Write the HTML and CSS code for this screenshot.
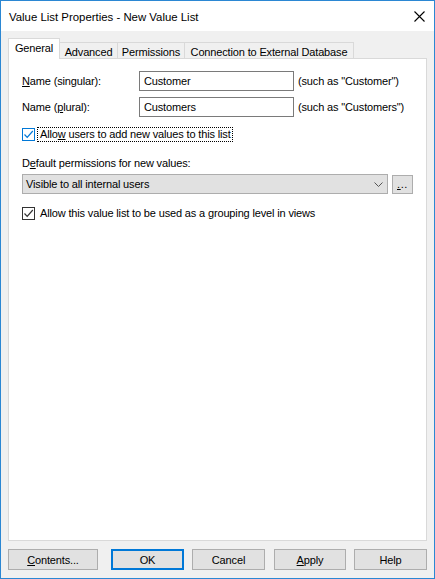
FILE: index.html
```html
<!DOCTYPE html>
<html>
<head>
<meta charset="utf-8">
<link rel="stylesheet" href="styles.css">
</head>
<body>
<div class="window">
  <div class="titlebar">
    <span class="title">Value List Properties - New Value List</span>
    <svg class="close" width="11" height="11" viewBox="0 0 11 11"><path d="M0.5 0.5 L10.5 10.5 M10.5 0.5 L0.5 10.5" stroke="#000" stroke-width="1.1" fill="none"/></svg>
  </div>
  <div class="client">
    <div class="tabs">
      <div class="tab active t-general">General</div>
      <div class="tab t-adv">Advanced</div>
      <div class="tab t-perm">Permissions</div>
      <div class="tab t-conn">Connection to External Database</div>
    </div>
    <div class="panel">
      <div class="row r1">
        <span class="label"><u>N</u>ame (singular):</span>
        <span class="input">Customer</span>
        <span class="hint">(such as "Customer")</span>
      </div>
      <div class="row r2">
        <span class="label">Name (<u>p</u>lural):</span>
        <span class="input">Customers</span>
        <span class="hint">(such as "Customers")</span>
      </div>
      <div class="check-row c1">
        <span class="box box-focus">
          <svg width="11" height="11" viewBox="0 0 11 11"><path d="M1.5 5.5 L4.2 8.3 L9.8 2" stroke="#0078d7" stroke-width="1.2" fill="none"/></svg>
        </span>
        <span class="check-label focus">Allo<u>w</u> users to add new values to this list</span>
      </div>
      <div class="section-label">D<u>e</u>fault permissions for new values:</div>
      <div class="combo-row">
        <div class="combo">
          <span>Visible to all internal users</span>
          <svg class="chev" width="9" height="5" viewBox="0 0 9 5"><path d="M0.5 0.5 L4.5 4.5 L8.5 0.5" stroke="#555" stroke-width="1" fill="none"/></svg>
        </div>
        <div class="dots"><u>.</u>..</div>
      </div>
      <div class="check-row c2">
        <span class="box">
          <svg width="11" height="11" viewBox="0 0 11 11"><path d="M1.5 5.5 L4.2 8.3 L9.8 2" stroke="#333" stroke-width="1.2" fill="none"/></svg>
        </span>
        <span class="check-label">Allow this value list to be used as a <u>g</u>rouping level in views</span>
      </div>
    </div>
    <div class="buttons">
      <div class="btn b-contents"><u>C</u>ontents...</div>
      <div class="btn b-ok default">OK</div>
      <div class="btn b-cancel">Cancel</div>
      <div class="btn b-apply"><u>A</u>pply</div>
      <div class="btn b-help">Help</div>
    </div>
  </div>
</div>
</body>
</html>
```
FILE: styles.css
```css
* { box-sizing: border-box; }
html, body { margin: 0; padding: 0; }
body {
  width: 435px;
  height: 579px;
  font-family: "Liberation Sans", Arial, sans-serif;
  font-size: 11px;
  letter-spacing: -0.15px;
  color: #000;
  background: #fff;
}
u { text-decoration: underline; text-underline-offset: 1px; }
.window {
  width: 435px;
  height: 579px;
  border: 1px solid #2b87d3;
  display: flex;
  flex-direction: column;
  background: #f0f0f0;
}
.titlebar {
  height: 30px;
  background: #fff;
  display: flex;
  align-items: center;
  justify-content: space-between;
  padding-left: 8px;
  padding-right: 9px;
  flex: none;
}
.title { font-size: 11.4px; letter-spacing: 0; padding-top: 1px; }
.close { display: block; }
.client {
  flex: 1;
  display: flex;
  flex-direction: column;
  padding: 7px 7px 8px 7px;
}
.tabs {
  height: 21px;
  display: flex;
  align-items: flex-end;
  flex: none;
}
.tab {
  height: 17px;
  border: 1px solid #d9d9d9;
  border-bottom: none;
  border-left: none;
  background: #f0f0f0;
  display: flex;
  align-items: center;
  justify-content: center;
  padding-top: 1px;
  white-space: nowrap;
}
.tab.active {
  height: 21px;
  background: #fff;
  border-left: 1px solid #d9d9d9;
  position: relative;
  z-index: 1;
  padding-top: 0;
  padding-bottom: 2px;
}
.t-general { width: 52px; }
.t-adv { width: 58px; }
.t-perm { width: 67px; }
.t-conn { width: 169px; }
.panel {
  margin-top: -1px;
  height: 483px;
  background: #fff;
  border: 1px solid #d9d9d9;
  padding: 12px 13px 0 13px;
  flex: none;
}
.row {
  display: flex;
  align-items: center;
  height: 20px;
}
.r2 { margin-top: 6px; }
.label { width: 117px; flex: none; }
.input {
  width: 155px;
  height: 20px;
  border: 1px solid #7a7a7a;
  background: #fff;
  padding-left: 4px;
  display: flex;
  align-items: center;
  flex: none;
}
.hint { margin-left: 4px; white-space: nowrap; }
.check-row {
  display: flex;
  align-items: center;
  height: 15px;
}
.c1 { margin-top: 10px; }
.c2 { margin-top: 12px; }
.box {
  width: 13px;
  height: 13px;
  border: 1px solid #333;
  background: #fff;
  display: flex;
  align-items: center;
  justify-content: center;
  flex: none;
}
.box svg { display: block; }
.box-focus { border-color: #0078d7; }
.check-label {
  margin-left: 2px;
  padding: 0 1px 0 2px;
  height: 15px;
  line-height: 13px;
  white-space: nowrap;
  border: 1px dotted transparent;
}
.check-label.focus { border-color: #000; }
.section-label {
  margin-top: 14px;
  height: 14px;
  line-height: 14px;
}
.combo-row {
  display: flex;
  align-items: flex-start;
  margin-top: 4px;
}
.combo {
  width: 366px;
  height: 20px;
  border: 1px solid #adadad;
  background: #e1e1e1;
  display: flex;
  align-items: center;
  justify-content: space-between;
  padding-left: 3px;
  padding-right: 4px;
  flex: none;
}
.chev { display: block; }
.dots {
  margin-left: 4px;
  margin-top: 1px;
  width: 21px;
  height: 19px;
  border: 1px solid #adadad;
  background: #e1e1e1;
  display: flex;
  align-items: center;
  justify-content: center;
  padding-bottom: 2px;
  letter-spacing: 0.6px;
}
.buttons {
  margin-top: 8px;
  display: flex;
  height: 21px;
  flex: none;
}
.btn {
  height: 21px;
  border: 1px solid #adadad;
  background: #e1e1e1;
  display: flex;
  align-items: center;
  justify-content: center;
  flex: none;
}
.btn.default { border: 2px solid #0078d7; }
.b-contents { width: 90px; }
.b-ok { width: 73px; margin-left: 13px; }
.b-cancel { width: 73px; margin-left: 8px; }
.b-apply { width: 72px; margin-left: 9px; }
.b-help { width: 73px; margin-left: 8px; }
```
